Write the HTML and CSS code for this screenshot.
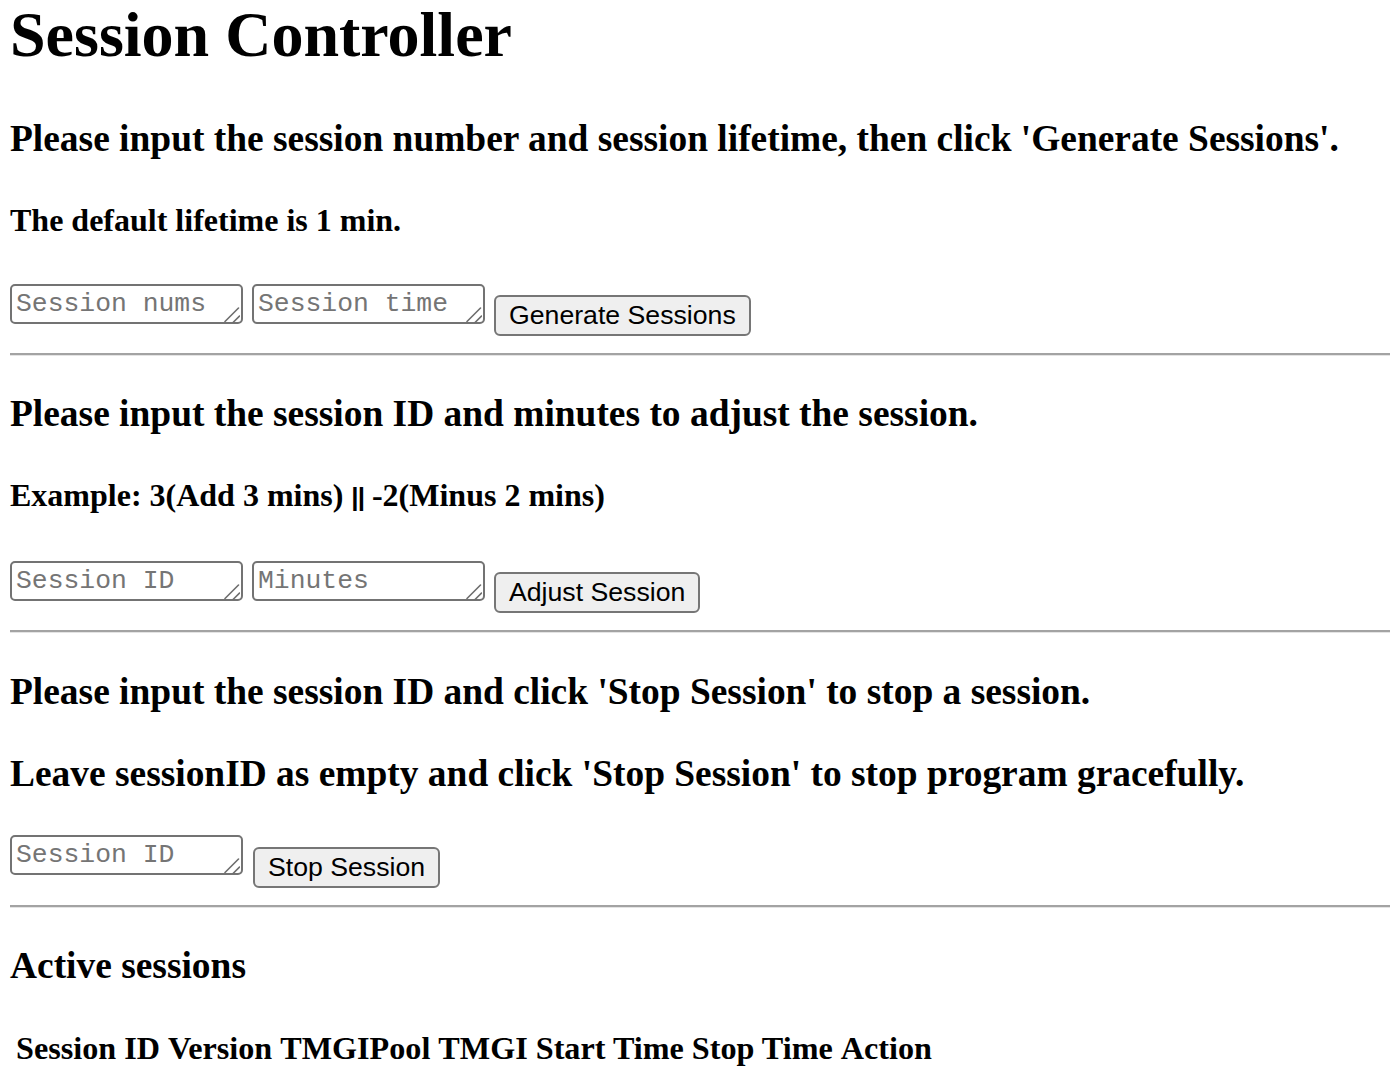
FILE: index.html
```html
<!DOCTYPE html>
<html lang="en">
<head>
<meta charset="utf-8">
<title>Session Controller</title>
<link rel="stylesheet" href="styles.css">
</head>
<body>
<h1 class="title">Session Controller</h1>

<section class="panel">
  <h3 class="prompt">Please input the session number and session lifetime, then click 'Generate Sessions'.</h3>
  <h4 class="note">The default lifetime is 1 min.</h4>
  <div class="controls">
    <span class="field-wrap">
      <textarea class="field" placeholder="Session nums"></textarea>
      <svg class="grip" width="16" height="16" viewBox="0 0 16 16" aria-hidden="true"><path d="M1 14.5L14.5 1M9 15.5L15.5 9"/></svg>
    </span>
    <span class="field-wrap">
      <textarea class="field" placeholder="Session time"></textarea>
      <svg class="grip" width="16" height="16" viewBox="0 0 16 16" aria-hidden="true"><path d="M1 14.5L14.5 1M9 15.5L15.5 9"/></svg>
    </span>
    <button class="action">Generate Sessions</button>
  </div>
</section>
<hr class="divider">

<section class="panel">
  <h3 class="prompt">Please input the session ID and minutes to adjust the session.</h3>
  <h4 class="note note--tall">Example: 3(Add 3 mins) <span class="sep">||</span> -2(Minus 2 mins)</h4>
  <div class="controls">
    <span class="field-wrap">
      <textarea class="field" placeholder="Session ID"></textarea>
      <svg class="grip" width="16" height="16" viewBox="0 0 16 16" aria-hidden="true"><path d="M1 14.5L14.5 1M9 15.5L15.5 9"/></svg>
    </span>
    <span class="field-wrap">
      <textarea class="field" placeholder="Minutes"></textarea>
      <svg class="grip" width="16" height="16" viewBox="0 0 16 16" aria-hidden="true"><path d="M1 14.5L14.5 1M9 15.5L15.5 9"/></svg>
    </span>
    <button class="action">Adjust Session</button>
  </div>
</section>
<hr class="divider">

<section class="panel">
  <h3 class="prompt">Please input the session ID and click 'Stop Session' to stop a session.</h3>
  <h3 class="prompt">Leave sessionID as empty and click 'Stop Session' to stop program gracefully.</h3>
  <div class="controls controls--wide">
    <span class="field-wrap">
      <textarea class="field" placeholder="Session ID"></textarea>
      <svg class="grip" width="16" height="16" viewBox="0 0 16 16" aria-hidden="true"><path d="M1 14.5L14.5 1M9 15.5L15.5 9"/></svg>
    </span>
    <button class="action action--low">Stop Session</button>
  </div>
</section>
<hr class="divider">

<section class="panel">
  <h3 class="prompt prompt--table">Active sessions</h3>
  <table class="sessions">
    <thead>
      <tr>
        <th>Session ID</th>
        <th>Version</th>
        <th>TMGIPool</th>
        <th>TMGI</th>
        <th>Start Time</th>
        <th>Stop Time</th>
        <th>Action</th>
      </tr>
    </thead>
    <tbody></tbody>
  </table>
</section>
</body>
</html>
```

FILE: styles.css
```css
html, body {
  background: #ffffff;
}

body {
  margin: 0;
  padding: 0 0 0 10px;
  font-family: "Liberation Serif", "Times New Roman", serif;
  color: #000000;
}

.title {
  margin: 0 0 47px;
  font-size: 64px;
  line-height: 70px;
  font-weight: bold;
}

.prompt {
  margin: 0 0 38.7px;
  font-size: 37.44px;
  line-height: 44px;
  font-weight: bold;
}

.prompt--table {
  margin-bottom: 35.6px;
}

.note {
  margin: 40.5px 0 45px;
  font-size: 32px;
  line-height: 37px;
  font-weight: bold;
}

.note--tall {
  padding-top: 0.5px;
}

.sep {
  font-family: "Liberation Sans", Arial, sans-serif;
  font-size: 26px;
  letter-spacing: -1px;
}

.controls {
  display: flex;
  align-items: flex-start;
  gap: 9px;
}

.controls--wide {
  gap: 10px;
}

.field-wrap {
  position: relative;
  display: block;
  width: 233px;
  height: 40px;
}

.field {
  display: block;
  box-sizing: border-box;
  width: 233px;
  height: 40px;
  margin: 0;
  padding: 4px 4px;
  border: 2px solid #737373;
  border-radius: 5px;
  background: #ffffff;
  font-family: "Liberation Mono", "Courier New", monospace;
  font-size: 26.4px;
  line-height: 28px;
  color: #000000;
  resize: none;
}

.field::placeholder {
  color: #757575;
}

.grip {
  position: absolute;
  right: 3px;
  bottom: 1px;
  fill: none;
  stroke: #6e6e6e;
  stroke-width: 1.6;
  stroke-linecap: round;
  pointer-events: none;
}

.action {
  box-sizing: border-box;
  margin: 11px 0 0;
  height: 41px;
  padding: 0 13px;
  border: 2px solid #767676;
  border-radius: 6px;
  background: #efefef;
  font-family: "Liberation Sans", Arial, sans-serif;
  font-size: 26.67px;
  line-height: 35px;
  color: #000000;
}

.action--low {
  margin-top: 12px;
}

.divider {
  margin: 17px 0 36.5px;
  height: 0;
  border: 0;
  border-top: 2px solid #a3a3a3;
  border-bottom: 1px solid #e4e4e4;
}

.sessions {
  margin: 0;
  border-collapse: separate;
  border-spacing: 4px;
}

.sessions th {
  padding: 2px;
  font-size: 32.18px;
  line-height: 37px;
  font-weight: bold;
  text-align: center;
}
```
